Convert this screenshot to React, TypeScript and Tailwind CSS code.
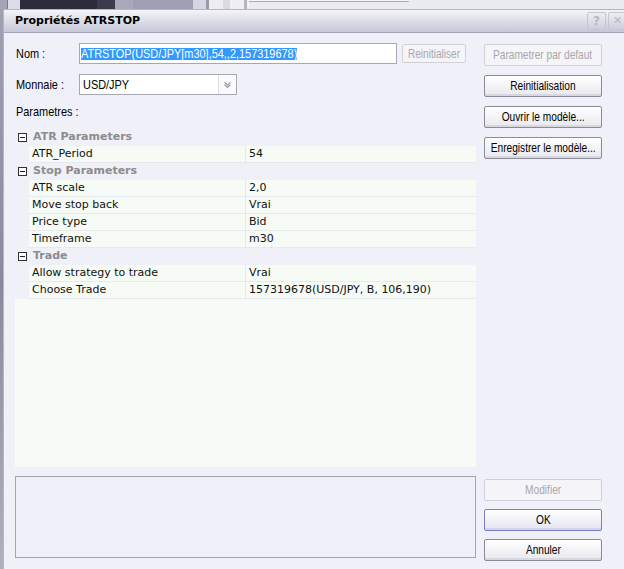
import React from "react";

const SANS = "font-['Liberation_Sans',Arial,sans-serif]";
const GRIDF = "font-['DejaVu_Sans',Verdana,sans-serif]";

function N({ children, center }: { children: React.ReactNode; center?: boolean }) {
  return (
    <span className={`inline-block whitespace-nowrap scale-x-[0.84] ${center ? "origin-center" : "origin-left"}`}>
      {children}
    </span>
  );
}

function B({ children }: { children: React.ReactNode }) {
  return <span className="inline-block whitespace-nowrap scale-x-[0.78] origin-center">{children}</span>;
}

function Btn({ label, disabled, primary }: { label: string; disabled?: boolean; primary?: boolean }) {
  const base = `h-[22px] w-[118px] shrink-0 flex items-center justify-center rounded-[2px] text-[13px] ${SANS}`;
  if (disabled)
    return (
      <div className={`${base} border border-[#cfd0d8] bg-[#f5f5f9] text-[#a8a8a8]`}>
        <B>{label}</B>
      </div>
    );
  if (primary)
    return (
      <div className={`${base} border border-[#7c7cc8] bg-gradient-to-b from-[#ffffff] to-[#e4e4f0] text-black shadow-[inset_0_-2px_0_#d4d4e8]`}>
        <B>{label}</B>
      </div>
    );
  return (
    <div className={`${base} border border-[#8a8a98] bg-gradient-to-b from-[#ffffff] to-[#e8e8ee] text-black shadow-[inset_0_-2px_0_#d8d8e0]`}>
      <B>{label}</B>
    </div>
  );
}

function Category({ label }: { label: string }) {
  return (
    <div className="h-[17px] flex items-center shrink-0">
      <div className="ml-[3px] w-[9px] h-[9px] border border-[#303030] bg-white flex items-center justify-center">
        <div className="w-[5px] h-[1px] bg-[#202020]" />
      </div>
      <span className={`ml-[6px] text-[11px] font-bold text-[#8c8c8c] ${GRIDF}`}>{label}</span>
    </div>
  );
}

function Prop({ name, value }: { name: string; value: string }) {
  return (
    <div className={`h-[17px] flex shrink-0 text-[11px] text-[#111] ${GRIDF}`}>
      <div className="w-[14px]" />
      <div className="flex-1 flex border-b border-[#e6e9f0]">
        <div className="w-[216px] bg-[#f6fbf5] pl-[3px] flex items-center whitespace-nowrap">{name}</div>
        <div className="w-[1px] bg-[#e6e9f0]" />
        <div className="flex-1 bg-[#f6fbf5] pl-[3px] flex items-center whitespace-nowrap">{value}</div>
      </div>
    </div>
  );
}

export default function App() {
  return (
    <div className="w-[624px] h-[569px] overflow-hidden bg-[#ebebf2] flex flex-col">
      {/* background windows strip */}
      <div className="h-[9px] flex shrink-0">
        <div className="w-[7px] bg-[#a4a4b4]" />
        <div className="w-[1px] bg-[#7a7a8a]" />
        <div className="w-[12px] bg-[#dcdce6]" />
        <div className="w-[77px] bg-[#2b2b3b]" />
        <div className="w-[18px] bg-[#3b3b4d]" />
        <div className="w-[18px] bg-[#a8a8ba]" />
        <div className="w-[60px] bg-[#a0a0b4]" />
        <div className="w-[13px] bg-[#d6d6e2]" />
        <div className="w-[3px] bg-[#9a9aac]" />
        <div className="w-[14px] bg-[#ececf2]" />
        <div className="w-[7px] bg-[#dadae4]" />
        <div className="w-[14px] bg-[#efeff5]" />
        <div className="w-[3px] bg-[#b4b4c4]" />
        <div className="w-[2px] bg-[#f2f2f8]" />
        <div className="w-[160px] bg-[#f6f6fa] border-b border-[#a8a8b8] h-[2px]" />
        <div className="flex-1" />
      </div>
      <div className="flex flex-1 min-h-0">
        <div className="w-[3px] bg-gradient-to-b from-[#a0a0b2] via-[#8a8a9c] to-[#b0b0c0]" />
        <div className="flex-1 flex flex-col border-l border-t border-[#b4b4c6] bg-[#f0f0f8]">
          {/* title bar */}
          <div className="h-[23px] shrink-0 flex items-center border-b border-[#a4a6ba] bg-gradient-to-b from-[#f4f4f8] to-[#c6c8d8]">
            <span className="pl-[11px] text-[11px] font-bold text-black font-['DejaVu_Sans',Verdana,sans-serif]">
              Propriétés ATRSTOP
            </span>
            <div className="flex-1" />
            <div className="w-[19px] h-[18px] border border-[#c4c6d4] rounded-[2px] flex items-center justify-center text-[12px] font-bold text-[#b4b6c6] font-['DejaVu_Sans',sans-serif] mr-[2px]">
              ?
            </div>
            <div className="w-[19px] h-[18px] border border-[#c4c6d4] rounded-[2px] flex items-center justify-center text-[11px] font-bold text-[#b4b6c6] font-['DejaVu_Sans',sans-serif] -mr-[3px]">
              ✕
            </div>
          </div>
          {/* body */}
          <div className="flex-1 flex pl-[11px] min-h-0">
            {/* left column */}
            <div className="w-[461px] flex flex-col">
              <div className={`mt-[10px] h-[21px] flex items-start text-[13px] ${SANS}`}>
                <div className="w-[64px] pl-[1px] h-[21px] flex items-center">
                  <N>Nom :</N>
                </div>
                <div className="w-[318px] h-[21px] border border-[#a8a8b4] bg-white flex items-center pl-[1px] overflow-hidden">
                  <span className="inline-block whitespace-nowrap scale-x-[0.84] origin-left bg-[#3399ff] text-white leading-[12px] h-[12px]">
                    ATRSTOP(USD/JPY[m30],54,,2,157319678)
                  </span>
                </div>
                <div className="ml-[5px] mt-[1px] w-[64px] h-[19px] border border-[#cfd0d8] rounded-[2px] bg-[#f5f5f9] text-[#a8a8a8] flex items-center justify-center text-[12px]">
                  <N center>Reinitialiser</N>
                </div>
              </div>
              <div className={`mt-[10px] h-[21px] flex items-center text-[13px] ${SANS}`}>
                <div className="w-[64px] pl-[1px]">
                  <N>Monnaie :</N>
                </div>
                <div className="w-[158px] h-[21px] border border-[#a8a8b4] bg-white flex items-center">
                  <span className="pl-[3px] flex-1">
                    <N>USD/JPY</N>
                  </span>
                  <div className="w-[18px] h-full border-l border-[#dcdce4] bg-[#fafafc] flex items-center justify-center">
                    <svg width="7" height="6" viewBox="0 0 7 6">
                      <path d="M0.5 0.5 L3.5 3 L6.5 0.5" stroke="#9a9aa8" strokeWidth="1.2" fill="none" />
                      <path d="M0.5 2.8 L3.5 5.3 L6.5 2.8" stroke="#9a9aa8" strokeWidth="1.2" fill="none" />
                    </svg>
                  </div>
                </div>
              </div>
              <div className={`mt-[9px] h-[16px] flex items-center pl-[1px] text-[13px] ${SANS}`}>
                <N>Parametres :</N>
              </div>
              {/* property grid */}
              <div className="mt-[8px] h-[339px] flex flex-col pt-[1px]">
                <Category label="ATR Parameters" />
                <Prop name="ATR_Period" value="54" />
                <Category label="Stop Parameters" />
                <Prop name="ATR scale" value="2,0" />
                <Prop name="Move stop back" value="Vrai" />
                <Prop name="Price type" value="Bid" />
                <Prop name="Timeframe" value="m30" />
                <Category label="Trade" />
                <Prop name="Allow strategy to trade" value="Vrai" />
                <Prop name="Choose Trade" value="157319678(USD/JPY, B, 106,190)" />
                <div className="flex-1 bg-[#f6fbf5]" />
              </div>
              <div className="mt-[9px] h-[82px] border border-[#a4a4ac] bg-[#f0f0f8]" />
            </div>
            {/* right column */}
            <div className="ml-[8px] w-[118px] flex flex-col pb-[8px]">
              <div className="mt-[11px] flex flex-col gap-[9px]">
                <Btn label="Parametrer par defaut" disabled />
                <Btn label="Reinitialisation" />
                <Btn label="Ouvrir le modèle..." />
                <Btn label="Enregistrer le modèle..." />
              </div>
              <div className="mt-auto flex flex-col gap-[8px]">
                <Btn label="Modifier" disabled />
                <Btn label="OK" primary />
                <Btn label="Annuler" />
              </div>
            </div>
          </div>
        </div>
      </div>
    </div>
  );
}
